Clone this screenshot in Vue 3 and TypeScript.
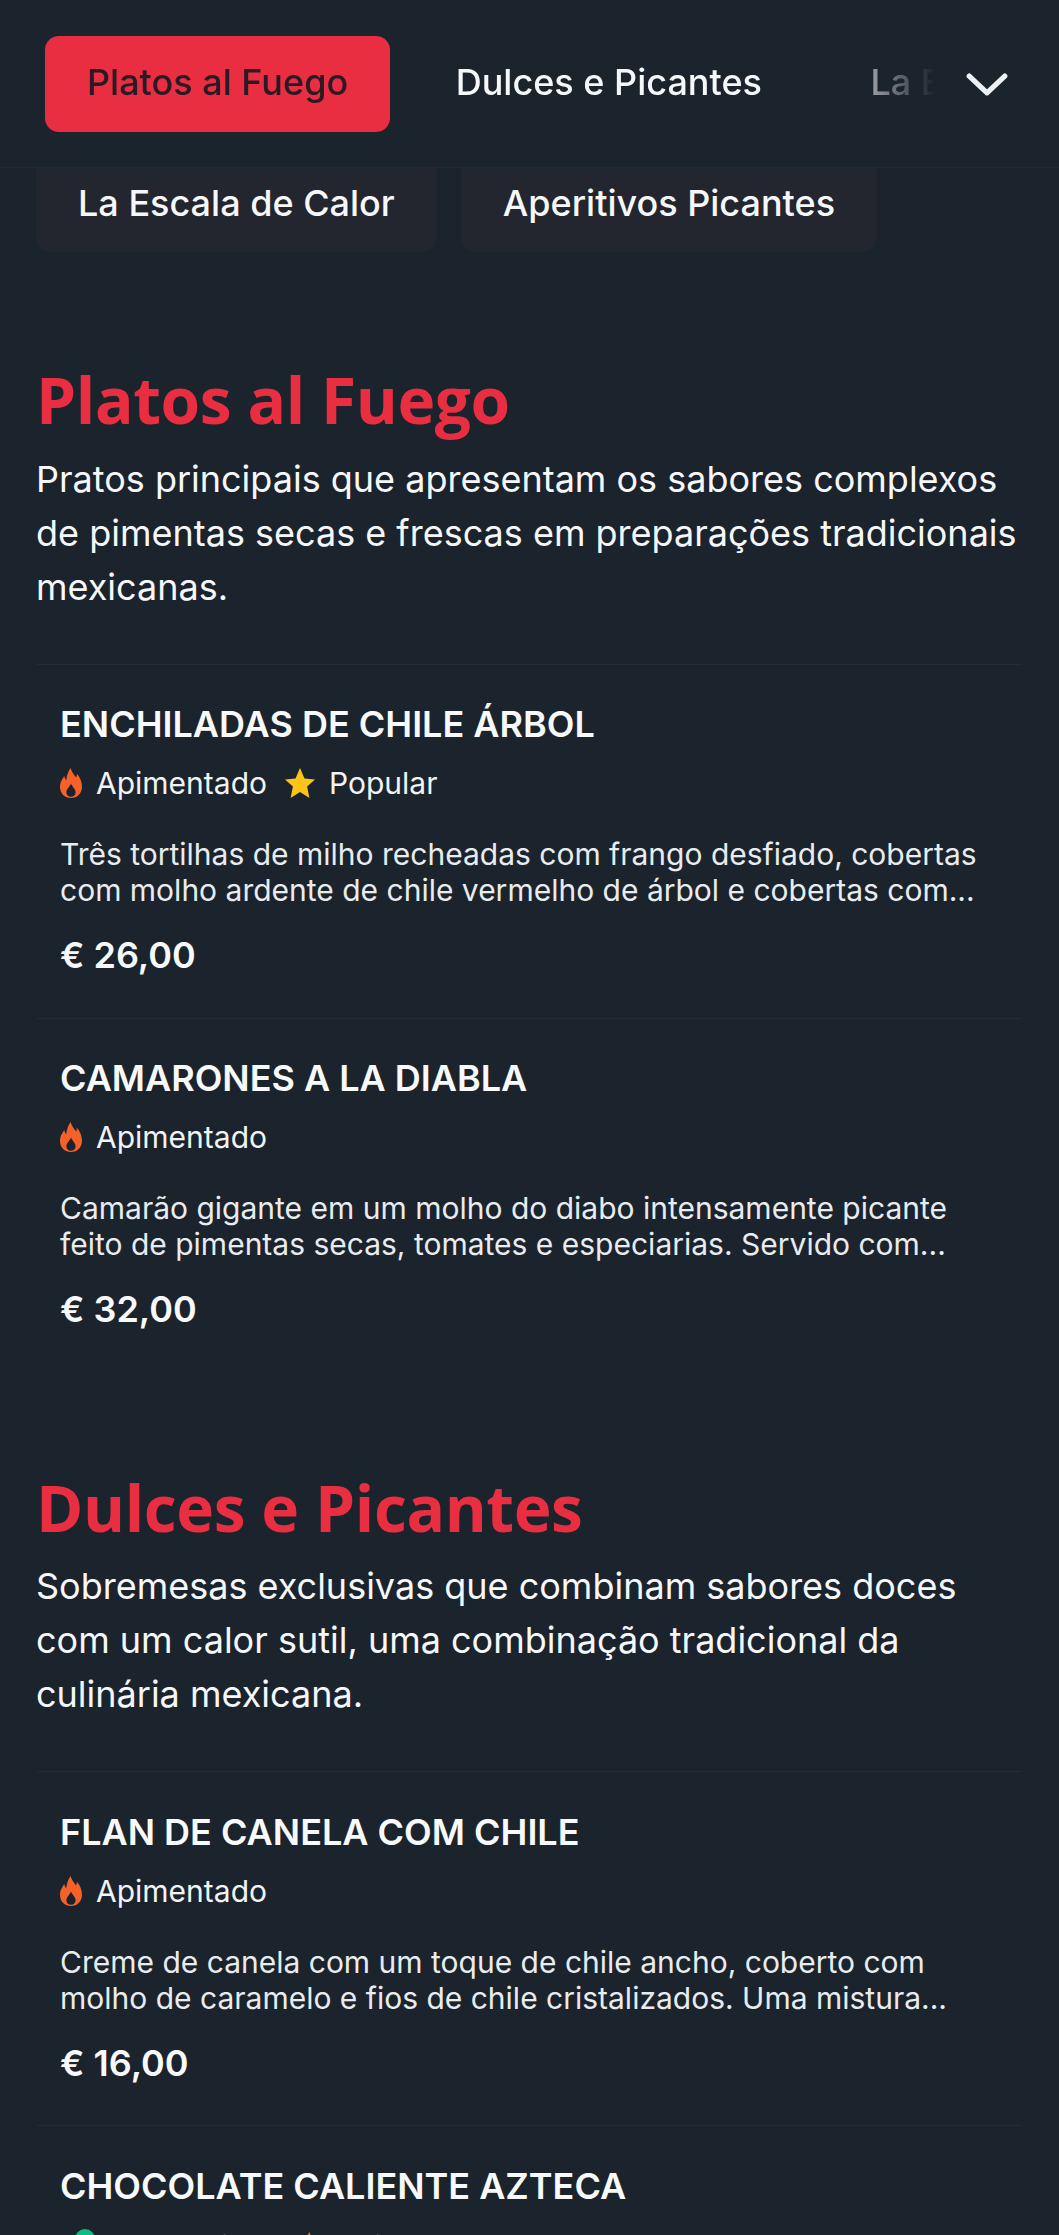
<script setup lang="ts">
interface Tag { kind: 'hot' | 'star' | 'veg'; label: string }
interface Dish { name: string; tags: Tag[]; desc: string[]; price: string }
interface Section { title: string; intro: string; dishes: Dish[] }

const hot: Tag = { kind: 'hot', label: 'Apimentado' }
const star: Tag = { kind: 'star', label: 'Popular' }
const veg: Tag = { kind: 'veg', label: 'Vegetariano' }

const sections: Section[] = [
  {
    title: 'Platos al Fuego',
    intro: 'Pratos principais que apresentam os sabores complexos de pimentas secas e frescas em preparações tradicionais mexicanas.',
    dishes: [
      { name: 'ENCHILADAS DE CHILE ÁRBOL', tags: [hot, star], desc: ['Três tortilhas de milho recheadas com frango desfiado, cobertas', 'com molho ardente de chile vermelho de árbol e cobertas com...'], price: '€ 26,00' },
      { name: 'CAMARONES A LA DIABLA', tags: [hot], desc: ['Camarão gigante em um molho do diabo intensamente picante', 'feito de pimentas secas, tomates e especiarias. Servido com...'], price: '€ 32,00' }
    ]
  },
  {
    title: 'Dulces e Picantes',
    intro: 'Sobremesas exclusivas que combinam sabores doces com um calor sutil, uma combinação tradicional da culinária mexicana.',
    dishes: [
      { name: 'FLAN DE CANELA COM CHILE', tags: [hot], desc: ['Creme de canela com um toque de chile ancho, coberto com', 'molho de caramelo e fios de chile cristalizados. Uma mistura...'], price: '€ 16,00' },
      { name: 'CHOCOLATE CALIENTE AZTECA', tags: [veg, hot], desc: [], price: '' }
    ]
  }
]
</script>

<template>
  <div class="page">
    <header class="topbar">
      <nav class="tabs">
        <span class="tab active">Platos al Fuego</span>
        <span class="tab">Dulces e Picantes</span>
        <span class="tab faded">La Escala de Calor</span>
      </nav>
      <svg class="chevron" viewBox="0 0 40 22" fill="none" stroke="#eef1f4" stroke-width="5" stroke-linecap="round" stroke-linejoin="round">
        <path d="M3 3 20 19 37 3" />
      </svg>
    </header>

    <div class="pills">
      <span class="pill">La Escala de Calor</span>
      <span class="pill">Aperitivos Picantes</span>
    </div>

    <main class="menu">
      <section v-for="section in sections" :key="section.title" class="section">
        <h2>{{ section.title }}</h2>
        <p class="intro">{{ section.intro }}</p>
        <article v-for="dish in section.dishes" :key="dish.name" class="dish">
          <h3>{{ dish.name }}</h3>
          <div class="tags">
            <span v-for="tag in dish.tags" :key="tag.label" class="tag" :class="tag.kind">
              <svg v-if="tag.kind === 'hot'" class="ico-hot" viewBox="0 0 22 30">
                <path fill="#f4622a" fill-rule="evenodd" d="M10.500 0c1.200 4.200 3.600 6.600 5.700 9.500 .5-1.300 .7-2.500 .6-3.800C19.800 8.800 22 13.300 22 18.800 22 25.500 17.300 30 11 30S0 25.500 0 19c0-5.200 2.500-8 4.300-11 .3 1.700 .9 3 1.900 4.200C6.800 7.500 8 3.500 10.500 0ZM11 15.500c-.7 3-4.600 5-4.600 9 0 2.500 1.900 4.300 4.600 4.300s4.600-1.800 4.600-4.300c0-4-3.900-6-4.600-9Z" />
              </svg>
              <svg v-else-if="tag.kind === 'star'" class="ico-star" viewBox="0 0 30 30">
                <path fill="#fcc419" d="M15 0l4.500 10.400L30 11.400l-7.900 7.200 2.300 11.400L15 24.100 5.600 30l2.300-11.400L0 11.400l10.500-1Z" />
              </svg>
              <svg v-else class="ico-veg" viewBox="0 0 36 48">
                <circle cx="25" cy="16" r="10" fill="#12b981" />
              </svg>
              <span>{{ tag.label }}</span>
            </span>
          </div>
          <p v-if="dish.desc.length" class="desc">
            <span v-for="line in dish.desc" :key="line">{{ line }}</span>
          </p>
          <div v-if="dish.price" class="price">{{ dish.price }}</div>
        </article>
      </section>
    </main>
  </div>
</template>

<style>
html, body { margin: 0; background: #1b232d; }
</style>

<style scoped>
.page {
  width: 1059px;
  height: 2235px;
  overflow: hidden;
  background: #1b232d;
  color: #f6f7f9;
  font-family: Inter, "Liberation Sans", sans-serif;
}
.topbar {
  position: relative;
  z-index: 2;
  height: 168px;
  box-sizing: border-box;
  display: flex;
  align-items: center;
  padding-left: 45px;
  background: #1b232d;
  border-bottom: 1px solid #222a35;
}
.tabs {
  display: flex;
  align-items: center;
  width: 890px;
  overflow: hidden;
  white-space: nowrap;
  -webkit-mask-image: linear-gradient(to right, #000 780px, transparent 890px);
  mask-image: linear-gradient(to right, #000 780px, transparent 890px);
}
.tab {
  flex: none;
  height: 96px;
  box-sizing: border-box;
  display: flex;
  align-items: center;
  padding: 0 25px 3px;
  border-radius: 14px;
  font-size: 36px;
  font-weight: 500;
  margin-right: 58.5px;
}
.tab.active {
  background: #e82e40;
  color: #2a1a26;
  padding: 0 42px 3px;
  margin-right: 40.5px;
}
.chevron {
  position: absolute;
  left: 966px;
  top: 73px;
  width: 42px;
  height: 23px;
}
.pills {
  display: flex;
  gap: 24px;
  margin-top: -14px;
  padding-left: 36px;
}
.pill {
  height: 98px;
  display: flex;
  align-items: center;
  box-sizing: border-box;
  padding: 0 42px;
  border-radius: 14px;
  background: #23252f;
  font-size: 36px;
  font-weight: 500;
}
.menu { padding: 111px 36px 0; }
.section { margin-bottom: 99px; }
h2 {
  margin: 0;
  font-family: "Open Sans", Lato, sans-serif;
  font-size: 64px;
  line-height: 74px;
  font-weight: 700;
  letter-spacing: -0.4px;
  color: #e82e40;
}
.intro {
  margin: 14.5px 0 0;
  font-size: 36px;
  line-height: 54px;
  font-weight: 400;
  color: #f6f7f9;
}
.dish {
  border-top: 1px solid #242c37;
  margin: 0 1px;
  padding: 37.5px 23px 36px;
  height: 354px;
  box-sizing: border-box;
}
.intro + .dish { margin-top: 50px; }
h3 {
  margin: 0;
  font-size: 36px;
  line-height: 44px;
  font-weight: 600;
  color: #f8f9fa;
}
.tags {
  display: flex;
  gap: 18px;
  margin-top: 15px;
  min-height: 44px;
  align-items: center;
}
.tag {
  display: flex;
  align-items: center;
  gap: 14px;
  font-size: 30px;
  color: #f1f3f5;
}
.ico-hot { width: 22px; height: 30px; }
.ico-star { width: 30px; height: 30px; }
.ico-veg { width: 36px; height: 48px; }
.desc {
  margin: 31px 0 0;
  font-size: 30px;
  line-height: 36px;
  color: #e9ecef;
  display: flex;
  flex-direction: column;
  white-space: nowrap;
}
.price {
  margin-top: 25px;
  font-size: 36px;
  line-height: 44px;
  font-weight: 600;
  color: #f8f9fa;
}
</style>
